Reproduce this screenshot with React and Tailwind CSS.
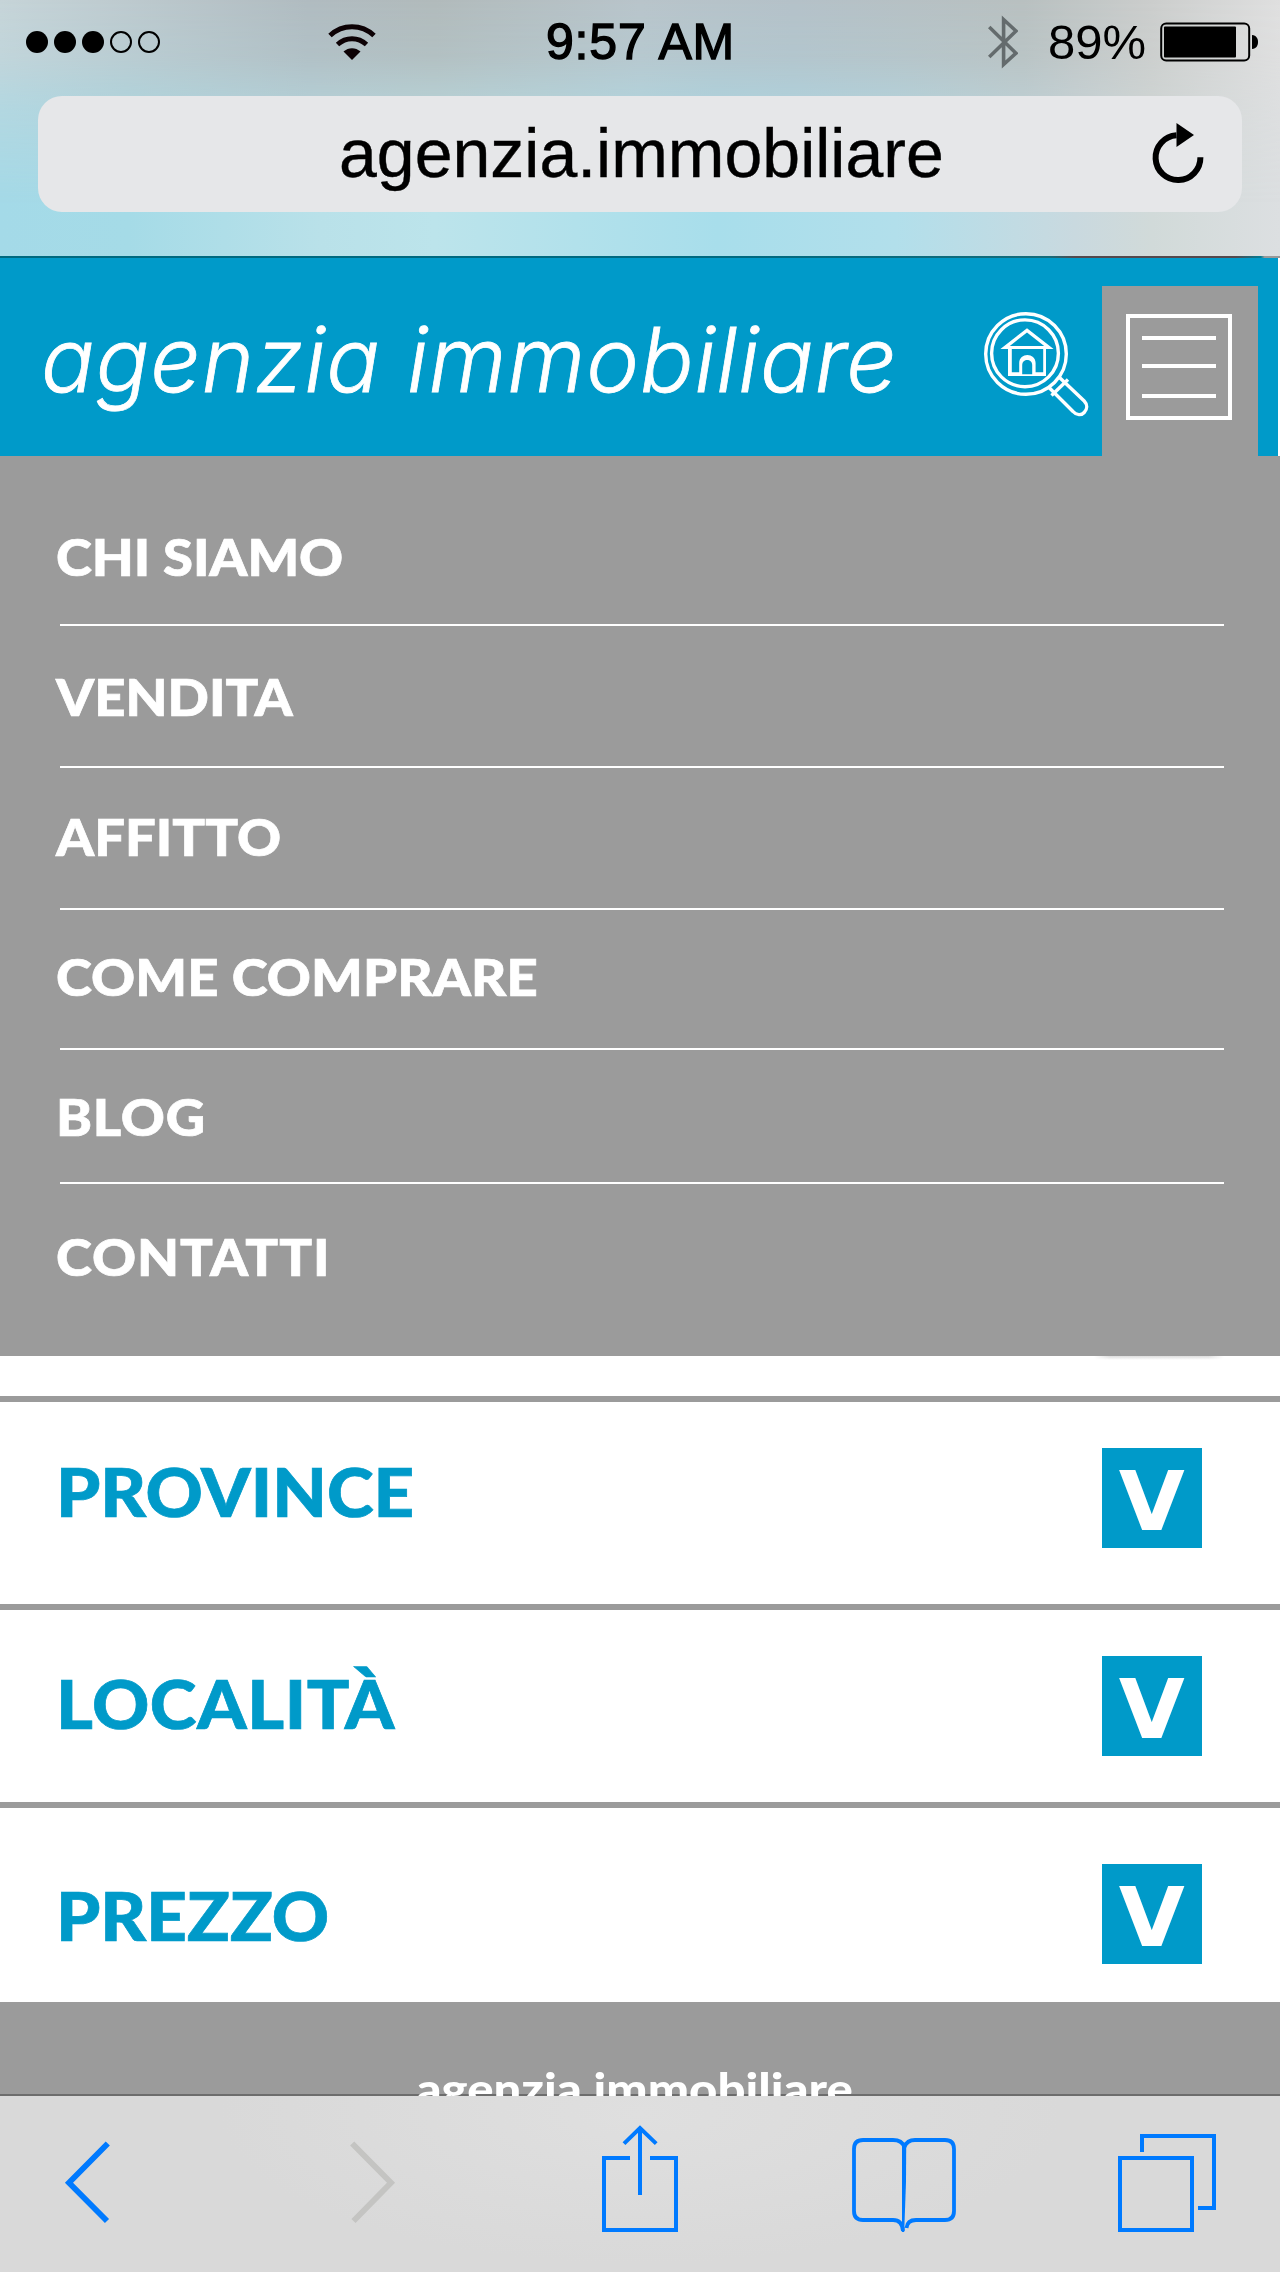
import React from "react";

const MENU = [
  { label: "CHI SIAMO", row: "h-[170px] pt-[70px]", text: "tracking-[-0.1px]" },
  { label: "VENDITA", row: "h-[142px] pt-[40px]", text: "" },
  { label: "AFFITTO", row: "h-[142px] pt-[38px]", text: "" },
  { label: "COME COMPRARE", row: "h-[140px] pt-[36px]", text: "tracking-[0.1px]" },
  { label: "BLOG", row: "h-[134px] pt-[36px]", text: "tracking-[0.7px]" },
  { label: "CONTATTI", row: "h-[172px] pt-[42px]", text: "tracking-[0.9px]" },
];

const FILTERS = [
  { label: "PROVINCE", row: "h-[208px] border-b-[6px]", text: "mt-[49px]", button: "mt-[46px]" },
  { label: "LOCALITÀ", row: "h-[198px] border-b-[6px]", text: "mt-[53px] tracking-[0.5px]", button: "mt-[46px]" },
  { label: "PREZZO", row: "h-[194px]", text: "mt-[67px]", button: "mt-[56px]" },
];

function SignalDots() {
  return (
    <div className="flex gap-[6px]">
      {[1, 1, 1, 0, 0].map((on, i) => (
        <span
          key={i}
          className={
            on
              ? "size-[22px] rounded-full bg-black"
              : "size-[22px] rounded-full border-2 border-black"
          }
        />
      ))}
    </div>
  );
}

function WifiIcon() {
  return (
    <svg className="ml-[168px] h-[36px] w-[48px]" viewBox="0 0 48 36" fill="none" stroke="#0d0205">
      <path d="M2 11.5 C14.5 -0.2 33.5 -0.2 46 11.5" strokeWidth="5" />
      <path d="M9.5 20.5 C18 12.8 30 12.8 38.5 20.5" strokeWidth="5" />
      <path d="M15.5 27.5 C20.5 23 27.5 23 32.5 27.5 L24 36 Z" fill="#0d0205" stroke="none" />
    </svg>
  );
}

function BluetoothIcon() {
  return (
    <svg className="ml-[251px] h-[54px] w-[30px]" viewBox="0 0 30 54" fill="none" stroke="#646b6d" strokeWidth="3.6">
      <path d="M1.2 12 L28 38.2 L15.6 49.5 V4.5 L28 16 L1.2 42" />
    </svg>
  );
}

function BatteryIcon() {
  return (
    <svg className="ml-[13px] h-[40px] w-[100px]" viewBox="0 0 100 40">
      <rect x="1.2" y="1.6" width="88" height="37" rx="5" fill="none" stroke="#000" strokeWidth="2" />
      <rect x="4" y="4.6" width="72" height="31" rx="1" />
      <path d="M92 13 C96.5 13.5 98 16.5 98 20 C98 23.5 96.5 26.5 92 27 Z" />
    </svg>
  );
}

function ReloadIcon() {
  return (
    <svg className="mb-[3px] ml-[209px] h-[62px] w-[54px]" viewBox="0 0 54 62">
      <path d="M24.5 13.3 A22.4 22.4 0 1 0 48.4 35.3" fill="none" stroke="#000" strokeWidth="6" />
      <path d="M24.5 1 L42 13 L24.5 25 Z" />
    </svg>
  );
}

function BrowserTop() {
  return (
    <div className="relative h-[256px] bg-[linear-gradient(90deg,#a4dae8_0%,#a5dbe7_10%,#b9e1e9_25%,#bce4eb_34%,#a8deeb_56%,#b2dfeb_70%,#c9d9df_84%,#d1dad9_90%,#dcdfe1_100%)]">
      <div className="absolute inset-0 bg-[linear-gradient(90deg,#c6d4d8_0%,#b0bbc0_24%,#b1babb_34%,#b8c4ca_50%,#b4c1c8_62%,#b8c0c0_80%,#cbcdcc_90%,#dfdfdf_100%)] [mask-image:linear-gradient(180deg,#000_0%,rgba(0,0,0,0.85)_22%,rgba(0,0,0,0.45)_42%,transparent_80%)]" />
      <div className="relative flex h-[84px] items-center pl-[26px] font-['Liberation_Sans',Arial,sans-serif] leading-[84px] text-black">
        <SignalDots />
        <WifiIcon />
        <div className="ml-[170px] w-[191px] text-[50px] tracking-[0.8px] whitespace-nowrap [-webkit-text-stroke:1.4px_black]">
          9:57 AM
        </div>
        <BluetoothIcon />
        <div className="ml-[30px] w-[99px] text-[49px] whitespace-nowrap">89%</div>
        <BatteryIcon />
      </div>
      <div className="relative mx-[38px] mt-[12px] flex h-[116px] items-center rounded-[24px] bg-[#e6e7e9] pl-[301px]">
        <div className="w-[604px] pb-[3px] font-['Liberation_Sans',Arial,sans-serif] text-[68px] leading-[80px] whitespace-nowrap text-black [-webkit-text-stroke:0.4px_black]">
          agenzia.immobiliare
        </div>
        <ReloadIcon />
      </div>
    </div>
  );
}

function HouseSearchIcon() {
  return (
    <svg className="mt-[42px] size-[125px] shrink-0" viewBox="0 0 125 125" fill="none" stroke="#fff" strokeWidth="3.4">
      <circle cx="51" cy="54" r="40.3" />
      <circle cx="50" cy="53.3" r="33.4" />
      <path
        d="M52 28.3 L78.6 49 H25.4 Z M52 32.4 L34.8 46 H69.2 Z"
        fill="#fff"
        fillRule="evenodd"
        stroke="none"
      />
      <path d="M33 48 H71 V76 H33 Z M36.8 48 V72.3 H44.2 V63 C44.2 52.3 60.6 52.3 60.6 63 V72.3 H68.2 V48 Z" fill="#fff" fillRule="evenodd" stroke="none" />
      <path d="M47.2 74.2 V65 C47.2 58.2 57.2 58.2 57.2 65 V74.2 Z" fill="#009ac9" stroke="none" />
      <path d="M74 87.5 L98 111.5 C101.5 115.5 106.5 115.5 109.2 112.5 C112.5 109 112.5 104.5 109.2 101 L84.5 77.5" />
      <path d="M76.5 95.5 L93 79.5" />
    </svg>
  );
}

function MenuButton() {
  return (
    <button className="mt-[28px] ml-[2px] flex h-[170px] w-[156px] shrink-0 justify-center bg-[#9b9b9b] pt-[28px]">
      <span className="mr-[2px] flex size-[106px] flex-col border-4 border-white px-[12px] pt-[18px]">
        <span className="h-[4px] w-[74px] bg-white" />
        <span className="mt-[24px] h-[4px] w-[74px] bg-white" />
        <span className="mt-[26px] h-[4px] w-[74px] bg-white" />
      </span>
    </button>
  );
}

function SiteHeader() {
  return (
    <>
      <div className="h-[2px] bg-[linear-gradient(90deg,#00697f_0%,#00697f_58%,#156c7b_82%,#55484c_84%,#55484c_96.5%,#007d95_98.5%,#999_98.8%)]" />
      <header className="mr-[2px] flex h-[198px] bg-[#009ac9]">
        <h1 className="w-[975px] shrink-0 pt-[52px] pl-[41px] font-[Inter,sans-serif] text-[89px] leading-[100px] font-light tracking-[1px] whitespace-nowrap text-white italic [-webkit-text-stroke:0.8px_white]">
          agenzia immobiliare
        </h1>
        <HouseSearchIcon />
        <MenuButton />
      </header>
    </>
  );
}

function MainMenu() {
  return (
    <nav className="h-[900px] bg-[#9b9b9b]">
      {MENU.map((item, i) => (
        <div key={item.label} className={item.row + " relative"}>
          <div className="ml-[56px] flex font-[Lato,sans-serif] text-[52px] leading-[60px] font-black whitespace-nowrap text-white [-webkit-text-stroke:0.7px_white]">
            <span className={item.text + " origin-left scale-x-[1.047]"}>{item.label}</span>
          </div>
          {i < MENU.length - 1 && <div className="absolute right-[56px] bottom-0 left-[60px] h-[2px] bg-white" />}
        </div>
      ))}
    </nav>
  );
}

function Filters() {
  return (
    <main className="bg-white">
      <div className="h-[46px] border-b-[6px] border-[#9b9b9b]">
        <div className="ml-[1094px] h-[4px] w-[130px] bg-[linear-gradient(180deg,#dcdcdc,#ffffff)] [mask-image:linear-gradient(90deg,transparent,#000_12%,#000_88%,transparent)]" />
      </div>
      {FILTERS.map((f) => (
        <section key={f.label} className={f.row + " flex items-start justify-between border-[#9b9b9b] pr-[78px] pl-[56px]"}>
          <h2 className={f.text + " origin-left scale-x-[1.064] font-[Lato,sans-serif] text-[66.5px] leading-[80px] font-black text-[#009ac9] [-webkit-text-stroke:0.7px_#009ac9]"}>
            {f.label}
          </h2>
          <button className={f.button + " flex size-[100px] justify-center bg-[#009ac9] pr-[1px] font-['DejaVu_Sans',sans-serif] text-[82px] leading-[107px] font-bold text-white"}>
            <span className="scale-x-[1.04]">V</span>
          </button>
        </section>
      ))}
    </main>
  );
}

function SiteFooter() {
  return (
    <footer className="relative h-[94px] overflow-hidden bg-[#9b9b9b]">
      <div className="absolute inset-x-0 bottom-0 h-[2px] bg-[#6d6d6d]" />
      <div className="relative flex justify-center pt-[61px] pr-[10px] font-[Lato,sans-serif] text-[44px] leading-[50px] font-black whitespace-nowrap text-white">
        <span className="scale-x-[1.115]">agenzia immobiliare</span>
      </div>
    </footer>
  );
}

function BrowserToolbar() {
  return (
    <div className="flex h-[176px] items-start bg-[#d9d9d9] bg-[radial-gradient(ellipse_420px_150px_at_50%_10%,#dfdfdf,#d9d9d9)] pt-[28px] pl-[62px]">
      <svg className="h-[110px] w-[50px]" viewBox="62 2124 50 110" fill="none" stroke="#007aff" strokeWidth="5.8">
        <path d="M107.8 2143.5 L69 2182.8 L107 2221" />
      </svg>
      <svg className="ml-[236px] h-[110px] w-[50px]" viewBox="348 2124 50 110" fill="none" stroke="#c4c4c2" strokeWidth="5.8">
        <path d="M352.2 2143.5 L391 2182.8 L353.5 2221" />
      </svg>
      <svg className="ml-[200px] h-[110px] w-[84px]" viewBox="598 2124 84 110" fill="none" stroke="#007aff" strokeWidth="4">
        <path d="M630 2158 H604 V2230 H676 V2158 H650" />
        <path d="M640 2195 V2130" />
        <path d="M624 2143.6 L640 2128 L656.2 2143.6" />
      </svg>
      <svg className="ml-[166px] h-[110px] w-[112px]" viewBox="848 2124 112 110" fill="none" stroke="#007aff" strokeWidth="4">
        <path d="M903 2231 C902.5 2224 899 2220 893 2220 H863 Q854 2220 854 2211 V2149 Q854 2140 863 2140 H893 Q902 2140 904.4 2147 Q907 2140 915 2140 H945 Q954 2140 954 2149 V2211 Q954 2220 945 2220 H916 C910 2220 907 2223 906.5 2228" strokeWidth="3.8" />
        <path d="M902 2146 H906.2 L906 2182 L904.2 2232 H902 Z" fill="#007aff" stroke="none" />
      </svg>
      <svg className="ml-[154px] h-[110px] w-[106px]" viewBox="1114 2124 106 110" fill="none" stroke="#007aff" strokeWidth="4">
        <rect x="1120" y="2158" width="72" height="72" />
        <path d="M1142 2152 V2136 H1214 V2208 H1198" />
      </svg>
    </div>
  );
}

export default function App() {
  return (
    <div className="h-[2272px] w-[1280px] overflow-hidden bg-white">
      <BrowserTop />
      <SiteHeader />
      <MainMenu />
      <Filters />
      <SiteFooter />
      <BrowserToolbar />
    </div>
  );
}
